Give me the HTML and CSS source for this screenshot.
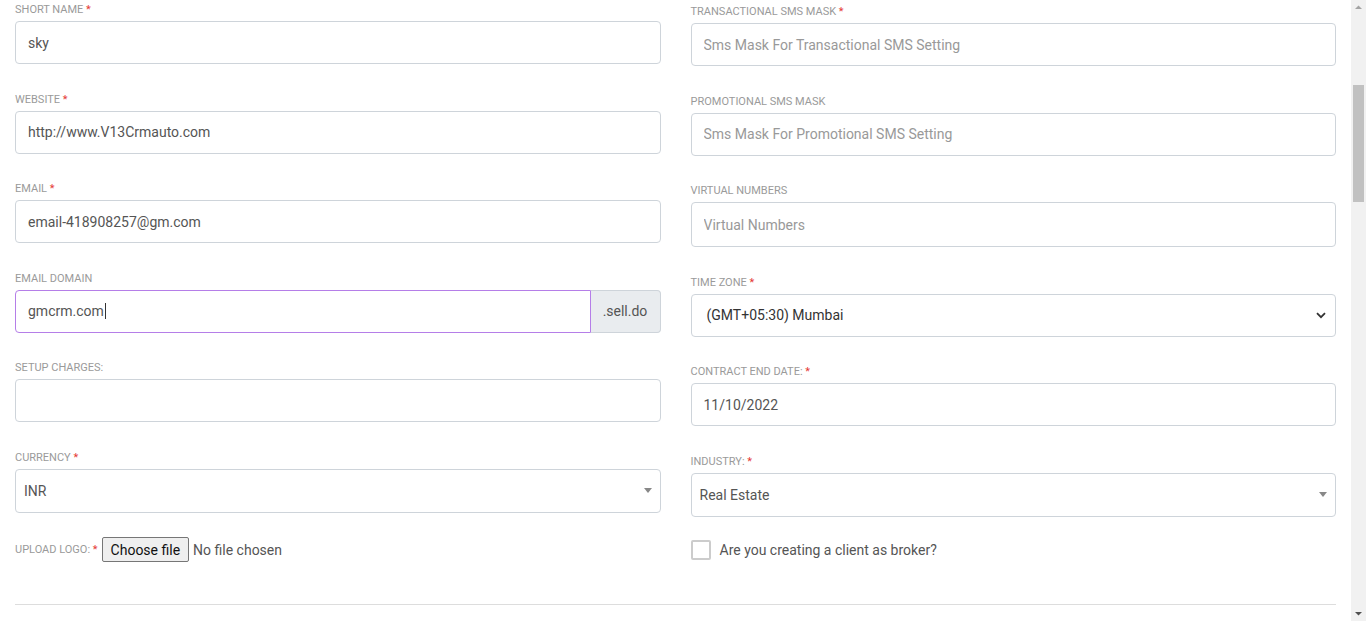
FILE: index.html
```html
<!DOCTYPE html>
<html>
<head>
<meta charset="utf-8">
<link rel="stylesheet" href="styles.css">
</head>
<body>
<div class="page">
  <main class="content">
    <div class="grid">
      <div class="col col-left">
        <div class="field">
          <label class="lbl">Short Name <span class="req">*</span></label>
          <input class="ctl" type="text" value="sky">
        </div>
        <div class="field">
          <label class="lbl">Website <span class="req">*</span></label>
          <input class="ctl" type="text" value="http://www.V13Crmauto.com">
        </div>
        <div class="field">
          <label class="lbl">Email <span class="req">*</span></label>
          <input class="ctl" type="text" value="email-418908257@gm.com">
        </div>
        <div class="field">
          <label class="lbl">Email Domain</label>
          <div class="group">
            <div class="ctl ctl-focus">gmcrm.com<span class="caret"></span></div>
            <span class="addon">.sell.do</span>
          </div>
        </div>
        <div class="field">
          <label class="lbl">Setup Charges:</label>
          <input class="ctl" type="text" value="">
        </div>
        <div class="field">
          <label class="lbl">Currency <span class="req">*</span></label>
          <div class="ctl sel2"><span>INR</span>
            <svg class="tri" width="8" height="5" viewBox="0 0 8 5"><path d="M0 0H8L4 5Z" fill="#888"/></svg>
          </div>
        </div>
        <div class="field-inline upload-row">
          <label class="lbl lbl-inline">Upload Logo: <span class="req">*</span></label>
          <button class="filebtn" type="button">Choose file</button>
          <span class="nofile">No file chosen</span>
        </div>
      </div>
      <div class="col col-right">
        <div class="field">
          <label class="lbl">Transactional SMS Mask <span class="req">*</span></label>
          <input class="ctl" type="text" placeholder="Sms Mask For Transactional SMS Setting">
        </div>
        <div class="field">
          <label class="lbl">Promotional SMS Mask</label>
          <input class="ctl" type="text" placeholder="Sms Mask For Promotional SMS Setting">
        </div>
        <div class="field">
          <label class="lbl">Virtual Numbers</label>
          <input class="ctl ctl-tall" type="text" placeholder="Virtual Numbers">
        </div>
        <div class="field">
          <label class="lbl">Time Zone <span class="req">*</span></label>
          <div class="ctl native"><span>(GMT+05:30) Mumbai</span>
            <svg class="chev" width="10" height="7" viewBox="0 0 10 7"><path d="M1 1.2L5 5.2L9 1.2" fill="none" stroke="#333" stroke-width="1.8"/></svg>
          </div>
        </div>
        <div class="field">
          <label class="lbl">Contract End Date: <span class="req">*</span></label>
          <input class="ctl" type="text" value="11/10/2022">
        </div>
        <div class="field">
          <label class="lbl">Industry: <span class="req">*</span></label>
          <div class="ctl sel2"><span>Real Estate</span>
            <svg class="tri" width="8" height="5" viewBox="0 0 8 5"><path d="M0 0H8L4 5Z" fill="#888"/></svg>
          </div>
        </div>
        <div class="field-inline check-row">
          <span class="box"></span>
          <span class="check-text">Are you creating a client as broker?</span>
        </div>
      </div>
    </div>
    <hr class="rule">
  </main>
  <aside class="scrollbar">
    <svg class="arrow" width="15" height="15" viewBox="0 0 15 15"><path d="M4 9H11L7.5 5.5Z" fill="#a3a3a3"/></svg>
    <div class="track"><div class="thumb"></div></div>
    <svg class="arrow" width="15" height="15" viewBox="0 0 15 15"><path d="M4 6H11L7.5 9.5Z" fill="#505050"/></svg>
  </aside>
</div>
</body>
</html>
```
FILE: styles.css
```css
* { box-sizing: border-box; }
html, body { margin: 0; padding: 0; height: 100%; overflow: hidden; }
body { font-family: Roboto, "Liberation Sans", Arial, sans-serif; background: #fff; color: #555; }
.page { display: flex; height: 621px; }
.content { flex: 1; padding: 3px 15px 0 15px; }
.grid { display: grid; grid-template-columns: 1fr 1fr; column-gap: 30px; }
.col { display: flex; flex-direction: column; }
.col-right { padding-top: 2px; }
.field { display: flex; flex-direction: column; margin-bottom: 28.5px; }
.lbl { font-size: 11px; line-height: 14px; text-transform: uppercase; color: #9a9a9a; margin-bottom: 4px; }
.req { color: #e53935; }
.ctl { height: 43px; width: 100%; border: 1px solid #ced4da; border-radius: 4px; padding: 0 12px; font-family: inherit; font-size: 14px; color: #555; background: #fff; outline: none; display: flex; align-items: center; }
.ctl::placeholder { color: #999; }
.ctl-tall { height: 45px; }
.group { display: flex; }
.group .ctl { flex: 1; border-radius: 4px 0 0 4px; }
.ctl-focus { border-color: #b57ee8; }
.caret { display: inline-block; width: 1px; height: 16px; background: #333; margin-left: 1px; }
.addon { width: 70px; height: 43px; display: flex; align-items: center; justify-content: center; background: #e9ecef; border: 1px solid #ced4da; border-left: 0; border-radius: 0 4px 4px 0; font-size: 14px; color: #555; }
.sel2 { justify-content: space-between; padding: 0 8px 0 8px; height: 44px; }
.native { justify-content: space-between; padding: 0 9px 0 15px; color: #333; }
.field-inline { display: flex; align-items: center; height: 26px; }
.upload-row { margin-top: -4.5px; }
.lbl-inline { margin: 0 4px 0 0; }
.filebtn { height: 25px; padding: 0 8px; font-family: inherit; font-size: 14px; color: #111; background: #efefef; border: 1px solid #767676; border-radius: 2px; margin-right: 4px; }
.nofile { font-size: 14px; color: #555; }
.check-row { margin-top: -8px; }
.box { width: 20px; height: 20px; border: 2px solid #ccc; border-radius: 2px; margin-right: 9px; }
.check-text { font-size: 14px; color: #555; }
.rule { border: 0; border-top: 1px solid #ddd; margin: 41px 0 0 0; }
.scrollbar { width: 15px; background: #f1f1f1; display: flex; flex-direction: column; }
.arrow { display: block; flex: 0 0 15px; }
.track { flex: 1; padding: 70px 2px 0 2px; }
.thumb { height: 117px; background: #c1c1c1; }
```
